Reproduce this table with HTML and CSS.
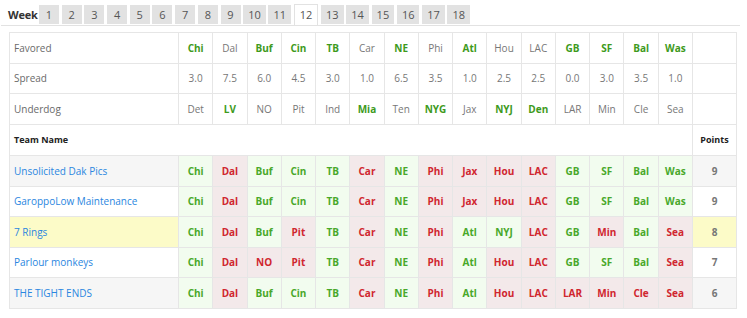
FILE: index.html
```html
<!DOCTYPE html>
<html>
<head>
<meta charset="utf-8">
<link rel="stylesheet" href="styles.css">
</head>
<body>
<div class="page">
  <div class="weekbar">
    <span class="weeklabel">Week</span>
    <div class="tabs">
      <span class="tab">1</span><span class="tab">2</span><span class="tab">3</span><span class="tab">4</span><span class="tab">5</span><span class="tab">6</span><span class="tab">7</span><span class="tab">8</span><span class="tab">9</span><span class="tab">10</span><span class="tab">11</span><span class="tab active">12</span><span class="tab">13</span><span class="tab">14</span><span class="tab">15</span><span class="tab">16</span><span class="tab">17</span><span class="tab">18</span>
    </div>
  </div>
  <table class="grid">
    <colgroup>
      <col class="c-name">
      <col class="c-g"><col class="c-g"><col class="c-g"><col class="c-g"><col class="c-g"><col class="c-g"><col class="c-g"><col class="c-g"><col class="c-g"><col class="c-g"><col class="c-g"><col class="c-g"><col class="c-g"><col class="c-g"><col class="c-g">
      <col class="c-pts">
    </colgroup>
    <tr class="info">
      <td class="lbl">Favored</td>
      <td class="w">Chi</td><td>Dal</td><td class="w">Buf</td><td class="w">Cin</td><td class="w">TB</td><td>Car</td><td class="w">NE</td><td>Phi</td><td class="w">Atl</td><td>Hou</td><td>LAC</td><td class="w">GB</td><td class="w">SF</td><td class="w">Bal</td><td class="w">Was</td>
      <td></td>
    </tr>
    <tr class="info">
      <td class="lbl">Spread</td>
      <td>3.0</td><td>7.5</td><td>6.0</td><td>4.5</td><td>3.0</td><td>1.0</td><td>6.5</td><td>3.5</td><td>1.0</td><td>2.5</td><td>2.5</td><td>0.0</td><td>3.0</td><td>3.5</td><td>1.0</td>
      <td></td>
    </tr>
    <tr class="info">
      <td class="lbl">Underdog</td>
      <td>Det</td><td class="w">LV</td><td>NO</td><td>Pit</td><td>Ind</td><td class="w">Mia</td><td>Ten</td><td class="w">NYG</td><td>Jax</td><td class="w">NYJ</td><td class="w">Den</td><td>LAR</td><td>Min</td><td>Cle</td><td>Sea</td>
      <td></td>
    </tr>
    <tr class="head">
      <td class="hname">Team Name</td>
      <td class="blank" colspan="15"></td>
      <td class="hpts">Points</td>
    </tr>
    <tr class="team odd">
      <td class="name"><a href="#">Unsolicited Dak Pics</a></td>
      <td class="g">Chi</td><td class="r">Dal</td><td class="g">Buf</td><td class="g">Cin</td><td class="g">TB</td><td class="r">Car</td><td class="g">NE</td><td class="r">Phi</td><td class="r">Jax</td><td class="r">Hou</td><td class="r">LAC</td><td class="g">GB</td><td class="g">SF</td><td class="g">Bal</td><td class="g">Was</td>
      <td class="pts">9</td>
    </tr>
    <tr class="team">
      <td class="name"><a href="#">GaroppoLow Maintenance</a></td>
      <td class="g">Chi</td><td class="r">Dal</td><td class="g">Buf</td><td class="g">Cin</td><td class="g">TB</td><td class="r">Car</td><td class="g">NE</td><td class="r">Phi</td><td class="r">Jax</td><td class="r">Hou</td><td class="r">LAC</td><td class="g">GB</td><td class="g">SF</td><td class="g">Bal</td><td class="g">Was</td>
      <td class="pts">9</td>
    </tr>
    <tr class="team mine">
      <td class="name"><a href="#">7 Rings</a></td>
      <td class="g">Chi</td><td class="r">Dal</td><td class="g">Buf</td><td class="r">Pit</td><td class="g">TB</td><td class="r">Car</td><td class="g">NE</td><td class="r">Phi</td><td class="g">Atl</td><td class="g">NYJ</td><td class="r">LAC</td><td class="g">GB</td><td class="r">Min</td><td class="g">Bal</td><td class="r">Sea</td>
      <td class="pts">8</td>
    </tr>
    <tr class="team">
      <td class="name"><a href="#">Parlour monkeys</a></td>
      <td class="g">Chi</td><td class="r">Dal</td><td class="r">NO</td><td class="r">Pit</td><td class="g">TB</td><td class="r">Car</td><td class="g">NE</td><td class="r">Phi</td><td class="g">Atl</td><td class="r">Hou</td><td class="r">LAC</td><td class="g">GB</td><td class="g">SF</td><td class="g">Bal</td><td class="r">Sea</td>
      <td class="pts">7</td>
    </tr>
    <tr class="team odd">
      <td class="name"><a href="#">THE TIGHT ENDS</a></td>
      <td class="g">Chi</td><td class="r">Dal</td><td class="g">Buf</td><td class="g">Cin</td><td class="g">TB</td><td class="r">Car</td><td class="g">NE</td><td class="r">Phi</td><td class="g">Atl</td><td class="r">Hou</td><td class="r">LAC</td><td class="r">LAR</td><td class="r">Min</td><td class="r">Cle</td><td class="r">Sea</td>
      <td class="pts">6</td>
    </tr>
  </table>
</div>
</body>
</html>
```

FILE: styles.css
```css
html, body {
  margin: 0;
  padding: 0;
  background: #fff;
}
body {
  font-family: "Open Sans", "DejaVu Sans", sans-serif;
  color: #666;
}
.page {
  padding: 5px 11px 0 8px;
}
.weekbar {
  display: flex;
  align-items: flex-end;
  border-bottom: 1px solid #e2e2e2;
  height: 20px;
  margin-left: -7px;
  padding-left: 7px;
  margin-right: -4px;
}
.weeklabel {
  font-weight: 700;
  font-size: 11px;
  color: #333;
  width: 31px;
  line-height: 19px;
  align-self: flex-start;
  letter-spacing: -0.2px;
}
.tabs {
  display: flex;
  gap: 2.7px;
  align-self: flex-start;
}
.tab {
  box-sizing: border-box;
  min-width: 20px;
  height: 19px;
  padding: 0 5px;
  background: #e2e2e2;
  color: #555;
  font-size: 11px;
  line-height: 19px;
  text-align: center;
}
.tab.active {
  background: #fff;
  border: 1px solid #e2e2e2;
  border-bottom: none;
  height: 21px;
  line-height: 19px;
  padding: 0 5px;
  margin-top: -1px;
  position: relative;
}
.grid {
  margin-top: 6px;
  margin-left: 1px;
  border-collapse: collapse;
  table-layout: fixed;
  width: 727px;
  font-size: 10px;
}
.c-name { width: 169px; }
.c-g { width: 34.27px; }
.c-pts { width: 44px; }
.grid td {
  border: 1px solid #e6e6e6;
  height: 29.5px;
  padding: 0;
  text-align: center;
  white-space: nowrap;
  overflow: hidden;
}
.head td {
  height: 30.5px;
}
.info td {
  color: #777;
}
.info td.lbl {
  text-align: left;
  padding-left: 4px;
  color: #6a6a6a;
}
.info td.w {
  color: #3e9a1c;
  font-weight: 700;
}
.head td {
  font-weight: 700;
  font-size: 9px;
  color: #222;
}
.head td.hname {
  text-align: left;
  padding-left: 4px;
  border-right: none;
}
.head td.blank {
  border-left: none;
}
.team td {
  font-weight: 700;
}
.team td.name {
  text-align: left;
  padding-left: 4px;
  font-weight: 400;
}
.team td.name a {
  color: #2a86e0;
  text-decoration: none;
}
.team.odd td.name, .team.odd td.pts {
  background: #f6f6f6;
}
.team.mine td.name, .team.mine td.pts {
  background: #fcfbc8;
}
.team td.pts {
  color: #777;
  font-size: 10px;
}
.team td.g {
  background: #f2fcef;
  color: #48a82a;
}
.team td.r {
  background: #f3e9ea;
  color: #d0262f;
}
```
